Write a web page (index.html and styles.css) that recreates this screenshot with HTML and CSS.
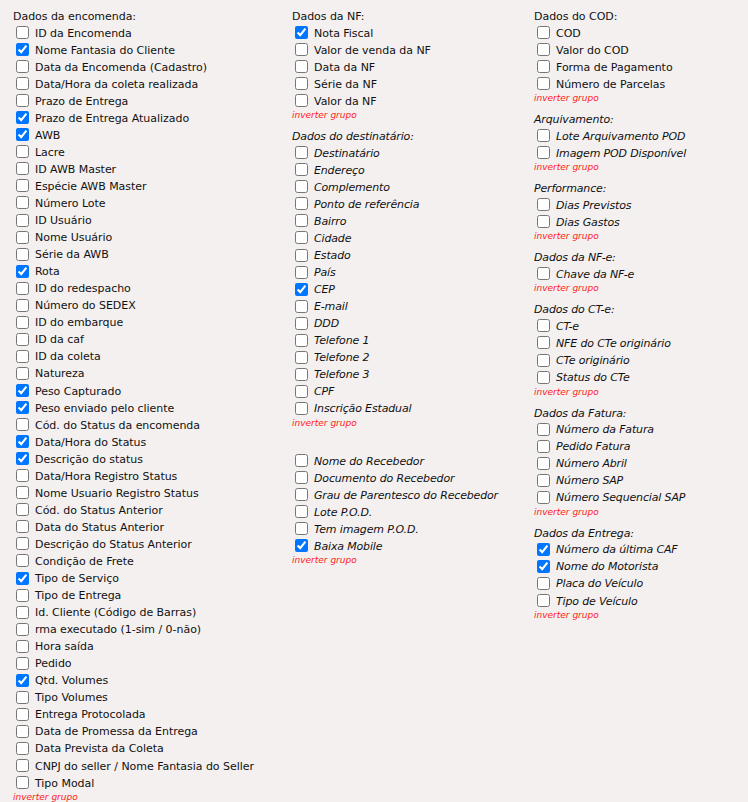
FILE: index.html
```html
<!DOCTYPE html>
<html lang="pt-BR">
<head>
<meta charset="utf-8">
<title>Campos</title>
<link rel="stylesheet" href="styles.css">
</head>
<body>
<div class="cols">
  <div class="col">
    <div class="group">
      <div class="gh">Dados da encomenda:</div>
      <label class="row"><input type="checkbox"><span>ID da Encomenda</span></label>
      <label class="row"><input type="checkbox" checked><span>Nome Fantasia do Cliente</span></label>
      <label class="row"><input type="checkbox"><span>Data da Encomenda (Cadastro)</span></label>
      <label class="row"><input type="checkbox"><span>Data/Hora da coleta realizada</span></label>
      <label class="row"><input type="checkbox"><span>Prazo de Entrega</span></label>
      <label class="row"><input type="checkbox" checked><span>Prazo de Entrega Atualizado</span></label>
      <label class="row"><input type="checkbox" checked><span>AWB</span></label>
      <label class="row"><input type="checkbox"><span>Lacre</span></label>
      <label class="row"><input type="checkbox"><span>ID AWB Master</span></label>
      <label class="row"><input type="checkbox"><span>Espécie AWB Master</span></label>
      <label class="row"><input type="checkbox"><span>Número Lote</span></label>
      <label class="row"><input type="checkbox"><span>ID Usuário</span></label>
      <label class="row"><input type="checkbox"><span>Nome Usuário</span></label>
      <label class="row"><input type="checkbox"><span>Série da AWB</span></label>
      <label class="row"><input type="checkbox" checked><span>Rota</span></label>
      <label class="row"><input type="checkbox"><span>ID do redespacho</span></label>
      <label class="row"><input type="checkbox"><span>Número do SEDEX</span></label>
      <label class="row"><input type="checkbox"><span>ID do embarque</span></label>
      <label class="row"><input type="checkbox"><span>ID da caf</span></label>
      <label class="row"><input type="checkbox"><span>ID da coleta</span></label>
      <label class="row"><input type="checkbox"><span>Natureza</span></label>
      <label class="row"><input type="checkbox" checked><span>Peso Capturado</span></label>
      <label class="row"><input type="checkbox" checked><span>Peso enviado pelo cliente</span></label>
      <label class="row"><input type="checkbox"><span>Cód. do Status da encomenda</span></label>
      <label class="row"><input type="checkbox" checked><span>Data/Hora do Status</span></label>
      <label class="row"><input type="checkbox" checked><span>Descrição do status</span></label>
      <label class="row"><input type="checkbox"><span>Data/Hora Registro Status</span></label>
      <label class="row"><input type="checkbox"><span>Nome Usuario Registro Status</span></label>
      <label class="row"><input type="checkbox"><span>Cód. do Status Anterior</span></label>
      <label class="row"><input type="checkbox"><span>Data do Status Anterior</span></label>
      <label class="row"><input type="checkbox"><span>Descrição do Status Anterior</span></label>
      <label class="row"><input type="checkbox"><span>Condição de Frete</span></label>
      <label class="row"><input type="checkbox" checked><span>Tipo de Serviço</span></label>
      <label class="row"><input type="checkbox"><span>Tipo de Entrega</span></label>
      <label class="row"><input type="checkbox"><span>Id. Cliente (Código de Barras)</span></label>
      <label class="row"><input type="checkbox"><span>rma executado (1-sim / 0-não)</span></label>
      <label class="row"><input type="checkbox"><span>Hora saída</span></label>
      <label class="row"><input type="checkbox"><span>Pedido</span></label>
      <label class="row"><input type="checkbox" checked><span>Qtd. Volumes</span></label>
      <label class="row"><input type="checkbox"><span>Tipo Volumes</span></label>
      <label class="row"><input type="checkbox"><span>Entrega Protocolada</span></label>
      <label class="row"><input type="checkbox"><span>Data de Promessa da Entrega</span></label>
      <label class="row"><input type="checkbox"><span>Data Prevista da Coleta</span></label>
      <label class="row"><input type="checkbox"><span>CNPJ do seller / Nome Fantasia do Seller</span></label>
      <label class="row"><input type="checkbox"><span>Tipo Modal</span></label>
      <a class="inv" href="#">inverter grupo</a>
    </div>
  </div>

  <div class="col">
    <div class="group">
      <div class="gh">Dados da NF:</div>
      <label class="row"><input type="checkbox" checked><span>Nota Fiscal</span></label>
      <label class="row"><input type="checkbox"><span>Valor de venda da NF</span></label>
      <label class="row"><input type="checkbox"><span>Data da NF</span></label>
      <label class="row"><input type="checkbox"><span>Série da NF</span></label>
      <label class="row"><input type="checkbox"><span>Valor da NF</span></label>
      <a class="inv" href="#">inverter grupo</a>
    </div>
    <div class="group it">
      <div class="gh">Dados do destinatário:</div>
      <label class="row"><input type="checkbox"><span>Destinatário</span></label>
      <label class="row"><input type="checkbox"><span>Endereço</span></label>
      <label class="row"><input type="checkbox"><span>Complemento</span></label>
      <label class="row"><input type="checkbox"><span>Ponto de referência</span></label>
      <label class="row"><input type="checkbox"><span>Bairro</span></label>
      <label class="row"><input type="checkbox"><span>Cidade</span></label>
      <label class="row"><input type="checkbox"><span>Estado</span></label>
      <label class="row"><input type="checkbox"><span>País</span></label>
      <label class="row"><input type="checkbox" checked><span>CEP</span></label>
      <label class="row"><input type="checkbox"><span>E-mail</span></label>
      <label class="row"><input type="checkbox"><span>DDD</span></label>
      <label class="row"><input type="checkbox"><span>Telefone 1</span></label>
      <label class="row"><input type="checkbox"><span>Telefone 2</span></label>
      <label class="row"><input type="checkbox"><span>Telefone 3</span></label>
      <label class="row"><input type="checkbox"><span>CPF</span></label>
      <label class="row"><input type="checkbox"><span>Inscrição Estadual</span></label>
      <a class="inv" href="#">inverter grupo</a>
    </div>
    <div class="group it">
      <div class="gh"></div>
      <label class="row"><input type="checkbox"><span>Nome do Recebedor</span></label>
      <label class="row"><input type="checkbox"><span>Documento do Recebedor</span></label>
      <label class="row"><input type="checkbox"><span>Grau de Parentesco do Recebedor</span></label>
      <label class="row"><input type="checkbox"><span>Lote P.O.D.</span></label>
      <label class="row"><input type="checkbox"><span>Tem imagem P.O.D.</span></label>
      <label class="row"><input type="checkbox" checked><span>Baixa Mobile</span></label>
      <a class="inv" href="#">inverter grupo</a>
    </div>
  </div>

  <div class="col">
    <div class="group">
      <div class="gh">Dados do COD:</div>
      <label class="row"><input type="checkbox"><span>COD</span></label>
      <label class="row"><input type="checkbox"><span>Valor do COD</span></label>
      <label class="row"><input type="checkbox"><span>Forma de Pagamento</span></label>
      <label class="row"><input type="checkbox"><span>Número de Parcelas</span></label>
      <a class="inv" href="#">inverter grupo</a>
    </div>
    <div class="group it">
      <div class="gh">Arquivamento:</div>
      <label class="row"><input type="checkbox"><span>Lote Arquivamento POD</span></label>
      <label class="row"><input type="checkbox"><span>Imagem POD Disponível</span></label>
      <a class="inv" href="#">inverter grupo</a>
    </div>
    <div class="group it">
      <div class="gh">Performance:</div>
      <label class="row"><input type="checkbox"><span>Dias Previstos</span></label>
      <label class="row"><input type="checkbox"><span>Dias Gastos</span></label>
      <a class="inv" href="#">inverter grupo</a>
    </div>
    <div class="group it">
      <div class="gh">Dados da NF-e:</div>
      <label class="row"><input type="checkbox"><span>Chave da NF-e</span></label>
      <a class="inv" href="#">inverter grupo</a>
    </div>
    <div class="group it">
      <div class="gh">Dados do CT-e:</div>
      <label class="row"><input type="checkbox"><span>CT-e</span></label>
      <label class="row"><input type="checkbox"><span>NFE do CTe originário</span></label>
      <label class="row"><input type="checkbox"><span>CTe originário</span></label>
      <label class="row"><input type="checkbox"><span>Status do CTe</span></label>
      <a class="inv" href="#">inverter grupo</a>
    </div>
    <div class="group it">
      <div class="gh">Dados da Fatura:</div>
      <label class="row"><input type="checkbox"><span>Número da Fatura</span></label>
      <label class="row"><input type="checkbox"><span>Pedido Fatura</span></label>
      <label class="row"><input type="checkbox"><span>Número Abril</span></label>
      <label class="row"><input type="checkbox"><span>Número SAP</span></label>
      <label class="row"><input type="checkbox"><span>Número Sequencial SAP</span></label>
      <a class="inv" href="#">inverter grupo</a>
    </div>
    <div class="group it">
      <div class="gh">Dados da Entrega:</div>
      <label class="row"><input type="checkbox" checked><span>Número da última CAF</span></label>
      <label class="row"><input type="checkbox" checked><span>Nome do Motorista</span></label>
      <label class="row"><input type="checkbox"><span>Placa do Veículo</span></label>
      <label class="row"><input type="checkbox"><span>Tipo de Veículo</span></label>
      <a class="inv" href="#">inverter grupo</a>
    </div>
  </div>
</div>
</body>
</html>
```

FILE: styles.css
```css
html {
  background: #f4f0f0;
}
body {
  margin: 8px;
  font-family: "DejaVu Sans", Verdana, sans-serif;
  font-size: 11px;
  letter-spacing: -0.04px;
  color: #111;
}
.cols {
  display: grid;
  grid-template-columns: 279px 242px 1fr;
  padding-left: 5px;
}
.col {
  display: flex;
  flex-direction: column;
}
.group {
  display: flex;
  flex-direction: column;
  margin-bottom: 7px;
}
.gh {
  height: 16px;
  line-height: 17px;
  white-space: nowrap;
}
.it {
  font-style: italic;
  letter-spacing: -0.15px;
}
.row {
  display: flex;
  align-items: center;
  height: 17.05px;
  padding-left: 3px;
  white-space: nowrap;
}
.row span {
  padding-top: 1px;
}
.row input {
  margin: 0 6px 0 0;
  width: 13px;
  height: 13px;
  flex: none;
}
.inv {
  display: block;
  height: 12px;
  line-height: 12px;
  font-size: 9px;
  letter-spacing: 0;
  font-style: italic;
  color: #ff1a1a;
  text-decoration: none;
}
```
